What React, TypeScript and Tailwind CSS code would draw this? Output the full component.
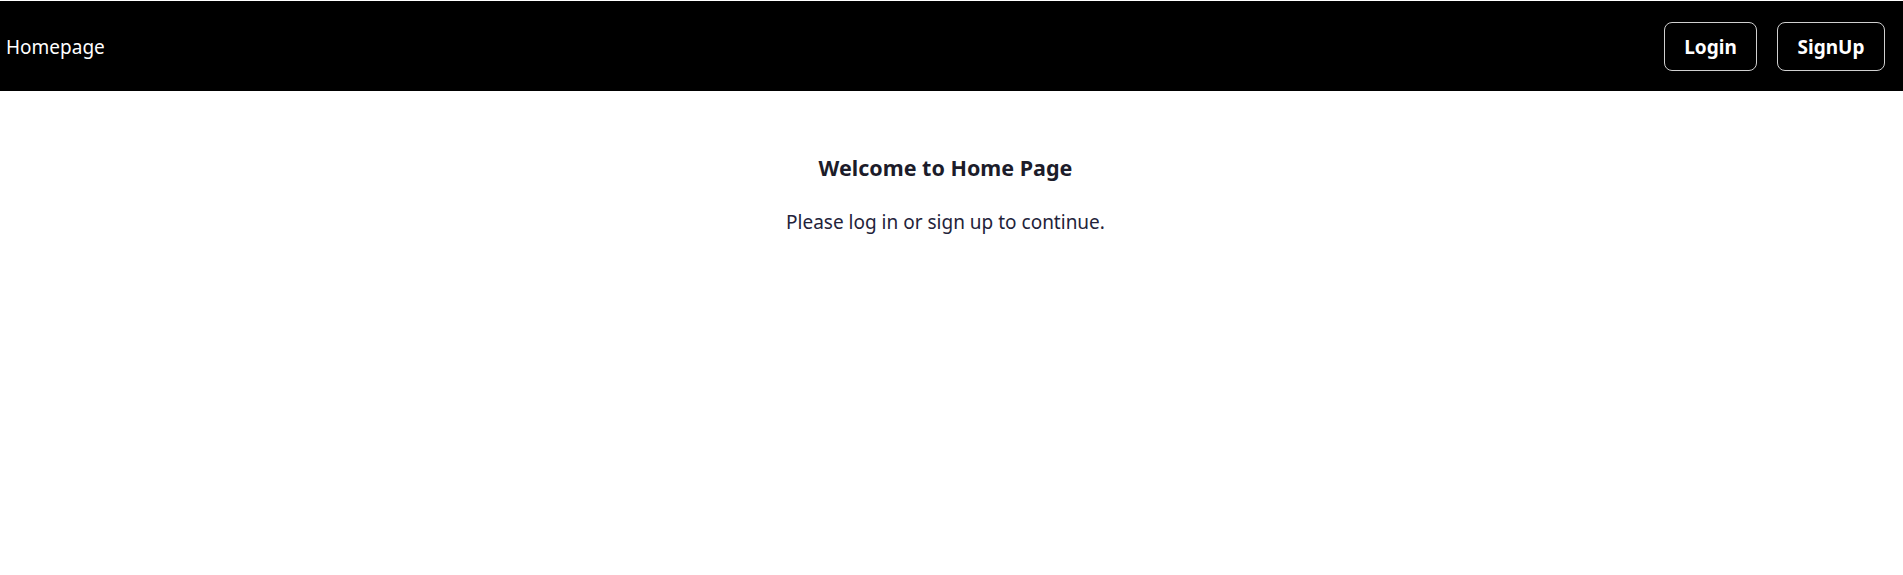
export default function App() {
  return (
    <div className="min-h-[575px] bg-white font-['Noto_Sans',sans-serif]">
      <div className="h-px bg-white" />
      <nav className="flex h-[90px] items-center justify-between bg-black pl-[6px] pr-[18px]">
        <span className="mt-[3px] text-[19px] text-white">Homepage</span>
        <div className="flex items-center gap-[20px]">
          <button className="h-[49px] w-[93px] rounded-lg border border-[#d0d0d0] pt-[3px] text-[19px] font-bold text-white">
            Login
          </button>
          <button className="h-[49px] w-[108px] rounded-lg border border-[#d0d0d0] pt-[3px] text-[19px] font-bold text-white">
            SignUp
          </button>
        </div>
      </nav>
      <main className="flex flex-col items-center pr-[12px] pt-[62px]">
        <h1 className="text-[21.5px] font-bold leading-[30px] text-[#1c1c2a]">Welcome to Home Page</h1>
        <p className="mt-[25px] text-[19px] leading-[28px] text-[#23233a]">Please log in or sign up to continue.</p>
      </main>
    </div>
  );
}
